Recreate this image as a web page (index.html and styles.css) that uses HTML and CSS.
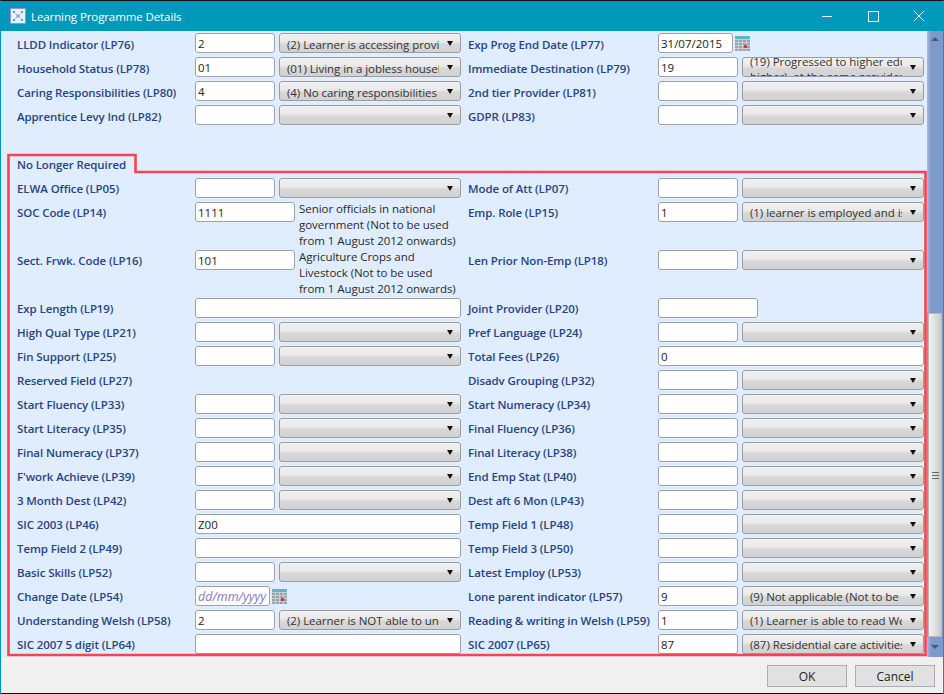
FILE: index.html
```html
<!DOCTYPE html>
<html lang="en">
<head>
  <meta charset="UTF-8">
  <title>Learning Programme Details</title>
  <link rel="stylesheet" href="styles.css">
</head>
<body>
  <div class="window">
    <div class="titlebar">
      <svg class="app-icon" width="16" height="16" viewBox="0 0 16 16">
        <rect x="0.5" y="0.5" width="15" height="15" fill="#eaf0f8" stroke="#9c8cc8"/>
        <path d="M4 4L12 12M12 4L4 12" stroke="#b4c4dc" stroke-width="1"/>
        <rect x="6.5" y="6.5" width="3" height="3" fill="#8fa3c4"/>
        <rect x="3" y="3" width="2" height="2" fill="#3fa9d8"/>
        <rect x="11" y="3" width="2" height="2" fill="#3fa9d8"/>
        <rect x="3" y="11" width="2" height="2" fill="#3fa9d8"/>
        <rect x="11" y="11" width="2" height="2" fill="#3fa9d8"/>
      </svg>
      <span class="title">Learning Programme Details</span>
      <div class="controls">
        <svg width="46" height="30" viewBox="0 0 46 30"><path d="M18 15.5H28" stroke="#fff"/></svg>
        <svg width="46" height="30" viewBox="0 0 46 30"><rect x="18.5" y="10.5" width="10" height="10" fill="none" stroke="#fff"/></svg>
        <svg width="46" height="30" viewBox="0 0 46 30"><path d="M18 10L28 20M28 10L18 20" stroke="#fff"/></svg>
      </div>
    </div>

    <div class="main">
      <div class="scroller">
        <div class="row">
          <div class="label">LLDD Indicator (LP76)</div>
          <div class="fields"><input class="code" value="2"><div class="combo"><span class="combo-text">(2) Learner is accessing provision</span></div></div>
          <div class="label right">Exp Prog End Date (LP77)</div>
          <div class="fields"><input class="date" value="31/07/2015"><svg class="cal" width="15" height="15" viewBox="0 0 15 15"><use href="#calendar"/></svg></div>
        </div>
        <div class="row">
          <div class="label">Household Status (LP78)</div>
          <div class="fields"><input class="code" value="01"><div class="combo"><span class="combo-text">(01) Living in a jobless household</span></div></div>
          <div class="label right">Immediate Destination (LP79)</div>
          <div class="fields"><input class="code" value="19"><div class="combo"><span class="combo-text two-line">(19) Progressed to higher education (HE or<br>higher), at the same provider</span></div></div>
        </div>
        <div class="row">
          <div class="label">Caring Responsibilities (LP80)</div>
          <div class="fields"><input class="code" value="4"><div class="combo"><span class="combo-text">(4) No caring responsibilities</span></div></div>
          <div class="label right">2nd tier Provider (LP81)</div>
          <div class="fields"><input class="code"><div class="combo"></div></div>
        </div>
        <div class="row">
          <div class="label">Apprentice Levy Ind (LP82)</div>
          <div class="fields"><input class="code"><div class="combo"></div></div>
          <div class="label right">GDPR (LP83)</div>
          <div class="fields"><input class="code"><div class="combo"></div></div>
        </div>

        <div class="label heading">No Longer Required</div>

        <div class="section">
          <div class="row">
            <div class="label">ELWA Office (LP05)</div>
            <div class="fields"><input class="code"><div class="combo"></div></div>
            <div class="label right">Mode of Att (LP07)</div>
            <div class="fields"><input class="code"><div class="combo"></div></div>
          </div>
          <div class="row tall">
            <div class="label">SOC Code (LP14)</div>
            <div class="fields"><input class="mid" value="1111"><div class="desc">Senior officials in national<br>government (Not to be used<br>from 1 August 2012 onwards)</div></div>
            <div class="label right">Emp. Role (LP15)</div>
            <div class="fields"><input class="code" value="1"><div class="combo"><span class="combo-text">(1) learner is employed and is</span></div></div>
          </div>
          <div class="row tall">
            <div class="label">Sect. Frwk. Code (LP16)</div>
            <div class="fields"><input class="mid" value="101"><div class="desc">Agriculture Crops and<br>Livestock (Not to be used<br>from 1 August 2012 onwards)</div></div>
            <div class="label right">Len Prior Non-Emp (LP18)</div>
            <div class="fields"><input class="code"><div class="combo"></div></div>
          </div>
          <div class="row">
            <div class="label">Exp Length (LP19)</div>
            <div class="fields"><input class="wide"></div>
            <div class="label right">Joint Provider (LP20)</div>
            <div class="fields"><input class="mid"></div>
          </div>
          <div class="row">
            <div class="label">High Qual Type (LP21)</div>
            <div class="fields"><input class="code"><div class="combo"></div></div>
            <div class="label right">Pref Language (LP24)</div>
            <div class="fields"><input class="code"><div class="combo"></div></div>
          </div>
          <div class="row">
            <div class="label">Fin Support (LP25)</div>
            <div class="fields"><input class="code"><div class="combo"></div></div>
            <div class="label right">Total Fees (LP26)</div>
            <div class="fields"><input class="wide" value="0"></div>
          </div>
          <div class="row">
            <div class="label">Reserved Field (LP27)</div>
            <div class="fields"></div>
            <div class="label right">Disadv Grouping (LP32)</div>
            <div class="fields"><input class="code"><div class="combo"></div></div>
          </div>
          <div class="row">
            <div class="label">Start Fluency (LP33)</div>
            <div class="fields"><input class="code"><div class="combo"></div></div>
            <div class="label right">Start Numeracy (LP34)</div>
            <div class="fields"><input class="code"><div class="combo"></div></div>
          </div>
          <div class="row">
            <div class="label">Start Literacy (LP35)</div>
            <div class="fields"><input class="code"><div class="combo"></div></div>
            <div class="label right">Final Fluency (LP36)</div>
            <div class="fields"><input class="code"><div class="combo"></div></div>
          </div>
          <div class="row">
            <div class="label">Final Numeracy (LP37)</div>
            <div class="fields"><input class="code"><div class="combo"></div></div>
            <div class="label right">Final Literacy (LP38)</div>
            <div class="fields"><input class="code"><div class="combo"></div></div>
          </div>
          <div class="row">
            <div class="label">F'work Achieve (LP39)</div>
            <div class="fields"><input class="code"><div class="combo"></div></div>
            <div class="label right">End Emp Stat (LP40)</div>
            <div class="fields"><input class="code"><div class="combo"></div></div>
          </div>
          <div class="row">
            <div class="label">3 Month Dest (LP42)</div>
            <div class="fields"><input class="code"><div class="combo"></div></div>
            <div class="label right">Dest aft 6 Mon (LP43)</div>
            <div class="fields"><input class="code"><div class="combo"></div></div>
          </div>
          <div class="row">
            <div class="label">SIC 2003 (LP46)</div>
            <div class="fields"><input class="wide" value="Z00"></div>
            <div class="label right">Temp Field 1 (LP48)</div>
            <div class="fields"><input class="code"><div class="combo"></div></div>
          </div>
          <div class="row">
            <div class="label">Temp Field 2 (LP49)</div>
            <div class="fields"><input class="wide"></div>
            <div class="label right">Temp Field 3 (LP50)</div>
            <div class="fields"><input class="code"><div class="combo"></div></div>
          </div>
          <div class="row">
            <div class="label">Basic Skills (LP52)</div>
            <div class="fields"><input class="code"><div class="combo"></div></div>
            <div class="label right">Latest Employ (LP53)</div>
            <div class="fields"><input class="code"><div class="combo"></div></div>
          </div>
          <div class="row">
            <div class="label">Change Date (LP54)</div>
            <div class="fields"><input class="date" placeholder="dd/mm/yyyy"><svg class="cal" width="15" height="15" viewBox="0 0 15 15"><use href="#calendar"/></svg></div>
            <div class="label right">Lone parent indicator (LP57)</div>
            <div class="fields"><input class="code" value="9"><div class="combo"><span class="combo-text">(9) Not applicable (Not to be used</span></div></div>
          </div>
          <div class="row">
            <div class="label">Understanding Welsh (LP58)</div>
            <div class="fields"><input class="code" value="2"><div class="combo"><span class="combo-text">(2) Learner is NOT able to understand</span></div></div>
            <div class="label right">Reading &amp; writing in Welsh (LP59)</div>
            <div class="fields"><input class="code" value="1"><div class="combo"><span class="combo-text">(1) Learner is able to read Welsh</span></div></div>
          </div>
          <div class="row">
            <div class="label">SIC 2007 5 digit (LP64)</div>
            <div class="fields"><input class="wide"></div>
            <div class="label right">SIC 2007 (LP65)</div>
            <div class="fields"><input class="code" value="87"><div class="combo"><span class="combo-text">(87) Residential care activities</span></div></div>
          </div>
        </div>
      </div>

      <div class="scrollbar">
        <div class="track track-top"><span class="arrow-up"></span></div>
        <div class="thumb"><span class="grip"></span></div>
        <div class="track track-bottom"><span class="arrow-down"></span></div>
      </div>
    </div>

    <div class="footer">
      <button class="btn">OK</button>
      <button class="btn">Cancel</button>
    </div>

    <!-- red annotation drawn on top of the form -->
    <svg class="annotation" width="944" height="694" viewBox="0 0 944 694">
      <path d="M8.5 155H135.5V172H925.5V655H8.5Z" fill="none" stroke="#f5444e" stroke-width="2.6"/>
    </svg>
  </div>

  <svg width="0" height="0" class="defs">
    <symbol id="calendar" viewBox="0 0 15 15">
      <rect x="0" y="0" width="15" height="15" fill="#9aa3aa"/>
      <rect x="0" y="0" width="15" height="3" fill="#5fb4cc"/>
      <path d="M0 3.5H15M0 6.5H15M0 9.5H15M0 12.5H15M3.5 3V15M7.5 3V15M11.5 3V15" stroke="#c9ced2" stroke-width="1"/>
      <rect x="9" y="9" width="3" height="3" fill="#e0323c"/>
    </symbol>
  </svg>
</body>
</html>
```

FILE: styles.css
```css
* {
  box-sizing: border-box;
}
body {
  margin: 0;
  font-family: "Open Sans", "Noto Sans", sans-serif;
  font-size: 11.5px;
  letter-spacing: -0.05px;
  color: #2b2b2b;
}
.window {
  position: relative;
  display: flex;
  flex-direction: column;
  width: 944px;
  height: 694px;
  border-top: 1px solid #111;
  border-bottom: 1px solid #111;
  border-left: 1px solid #0099bc;
  border-right: 1px solid #0099bc;
  background-color: #f0f0f0;
  overflow: hidden;
}
.titlebar {
  display: flex;
  align-items: center;
  flex: none;
  height: 30px;
  padding-left: 9px;
  color: #fff;
  background-color: #0099bc;
}
.app-icon {
  flex: none;
}
.title {
  margin-left: 5px;
  font-size: 11.5px;
  letter-spacing: -0.1px;
}
.controls {
  display: flex;
  margin-left: auto;
  margin-right: 1px;
}
.main {
  display: flex;
  flex: none;
  height: 626px;
  background-color: #e0ecff;
  overflow: hidden;
}
.scroller {
  flex: none;
  width: 926px;
  padding: 2px 0 0 16px;
  overflow: hidden;
}
.row {
  display: grid;
  grid-template-columns: 178px 266px 197px 266px;
  height: 24px;
}
.row.tall {
  height: 48px;
}
.label {
  font-weight: 600;
  line-height: 23px;
  letter-spacing: -0.1px;
  color: #27457f;
  white-space: nowrap;
}
.label.right {
  padding-left: 7px;
}
.label.heading {
  height: 25px;
  margin-top: 24px;
  line-height: 24px;
}
.section .label {
  line-height: 21px;
}
.fields {
  display: flex;
  align-items: flex-start;
  gap: 4px;
}
input {
  height: 20px;
  padding: 0 2px;
  border: 1px solid #a2a2a2;
  border-radius: 3px;
  outline: none;
  font: inherit;
  letter-spacing: 0;
  color: #222;
  background-color: #fff;
}
input::placeholder {
  font-style: italic;
  font-size: 12.5px;
  color: #8878bc;
}
.code {
  width: 80px;
}
.mid {
  width: 100px;
}
.wide {
  width: 266px;
}
.date {
  width: 75px;
}
.cal {
  flex: none;
  margin: 3px 0 0 -2px;
}
.defs {
  position: absolute;
}
.combo {
  position: relative;
  width: 182px;
  height: 20px;
  padding-left: 7px;
  border: 1px solid #9c9c9c;
  border-radius: 3px;
  background: linear-gradient(#f1f1f1, #e9e9e9 45%, #d8d8d8 55%, #d2d2d2);
  overflow: hidden;
}
.combo::after {
  content: "";
  position: absolute;
  right: 7px;
  top: 7px;
  border-top: 5px solid #111;
  border-left: 3.5px solid transparent;
  border-right: 3.5px solid transparent;
}
.combo-text {
  display: block;
  width: 152px;
  line-height: 21px;
  white-space: nowrap;
  color: #333;
  overflow: hidden;
}
.combo-text.two-line {
  height: 36px;
  margin-top: -4.5px;
  line-height: 15px;
}
.section .combo-text {
  line-height: 19px;
}
.desc {
  margin-top: -1px;
  line-height: 16px;
  white-space: nowrap;
  color: #2b2b2b;
}
.scrollbar {
  display: flex;
  flex-direction: column;
  flex: none;
  width: 16px;
  background-color: #7f9ac8;
}
.track {
  display: flex;
  justify-content: center;
  background: linear-gradient(90deg, #a8bcdc, #7f9ac8 25%);
}
.track-top {
  height: 282px;
  padding-top: 6px;
}
.track-bottom {
  flex: 1;
  padding-top: 8px;
}
.arrow-up {
  width: 0;
  height: 0;
  border-bottom: 4px solid #3d5a8a;
  border-left: 4px solid transparent;
  border-right: 4px solid transparent;
}
.arrow-down {
  width: 0;
  height: 0;
  border-top: 4px solid #3d5a8a;
  border-left: 4px solid transparent;
  border-right: 4px solid transparent;
}
.thumb {
  display: flex;
  align-items: center;
  justify-content: center;
  height: 324px;
  margin-left: 1px;
  width: 14px;
  border: 1px solid #b8b8b8;
  background: linear-gradient(90deg, #f2f2f2, #dcdcdc 60%, #c8c8c8);
}
.grip {
  width: 7px;
  height: 7px;
  border-top: 1px solid #666;
  border-bottom: 1px solid #666;
  background: linear-gradient(#666, #666) center / 100% 1px no-repeat;
}
.footer {
  display: flex;
  justify-content: flex-end;
  gap: 8px;
  flex: 1;
  padding: 8px 8px 0 0;
}
.btn {
  width: 80px;
  height: 22px;
  padding: 0;
  border: 1px solid #adadad;
  font: inherit;
  font-size: 12px;
  color: #222;
  background-color: #e1e1e1;
}
.annotation {
  position: absolute;
  top: -1px;
  left: -1px;
  pointer-events: none;
}
```
